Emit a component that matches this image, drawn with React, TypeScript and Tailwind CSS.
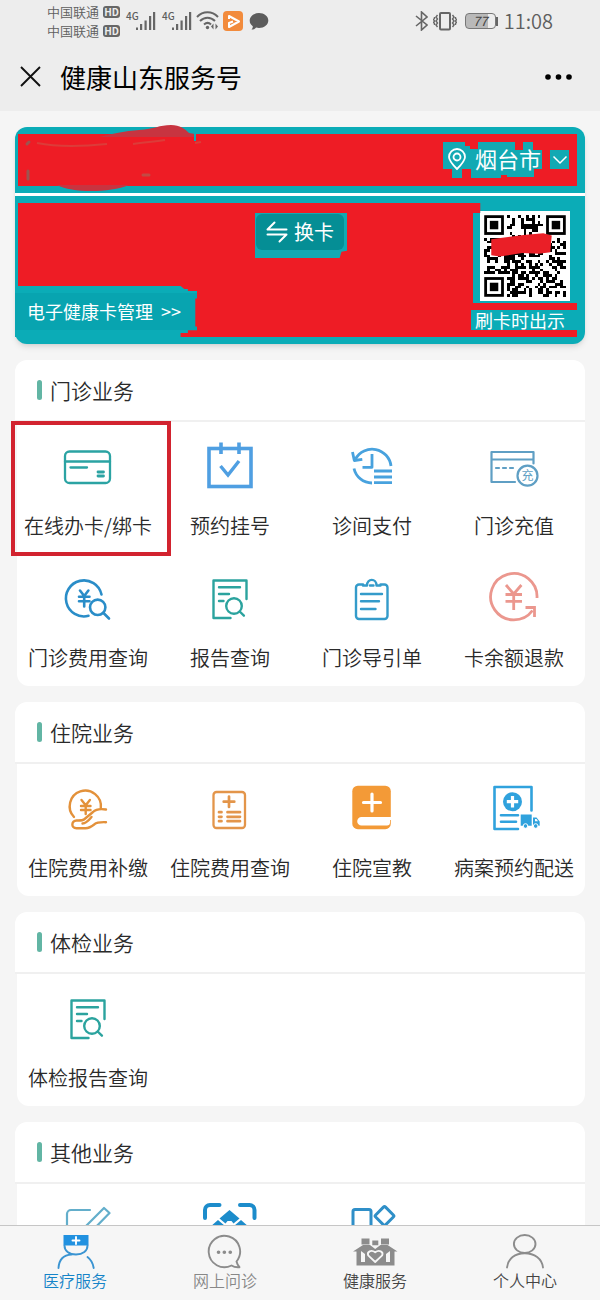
import { useState } from 'react';
import type { ReactNode } from 'react';

type Service = { label: string; icon: ReactNode; marked?: boolean };

const line = {
    fill: 'none',
    strokeLinecap: 'round' as const,
    strokeLinejoin: 'round' as const,
};

function Icon({ children }: { children: ReactNode }) {
    return (
        <svg className="w-[52px] h-[52px] overflow-visible" viewBox="0 0 52 52" aria-hidden="true">
            {children}
        </svg>
    );
}

const CardIcon = () => (
    <Icon>
        <g {...line} stroke="#2ba3a3" strokeWidth="2.3">
            <rect x="3" y="11.5" width="45" height="31.5" rx="4.5" />
            <path d="M3 21.5h45M8.5 27.5h16.5" />
            <path d="M36 32h5.5M36 36h5.5" strokeWidth="2.8" />
        </g>
    </Icon>
);

const CalendarIcon = () => (
    <Icon>
        <g fill="none" stroke="#4f9fe2" strokeWidth="3.6">
            <rect x="5" y="8.5" width="42" height="38" />
            <path d="M17 2.5V14M35 2.5V14" />
            <path d="M16.5 26l7.500 9L35 21" strokeWidth="3.4" />
        </g>
    </Icon>
);

const HistoryIcon = () => (
    <Icon>
        <g {...line} stroke="#48a2de" strokeWidth="2.8" strokeLinecap="butt">
            <path d="M45 26A19 19 0 0 0 9.5 19" />
            <path d="M6.5 12l1.8 8.500 8-1.200" />
            <path d="M8 28.5A18.5 18.5 0 0 0 26 43" />
            <path d="M26 14v13.300h-9.500" />
            <path d="M28 31h18M28 37h18M28 42.700h18" />
        </g>
    </Icon>
);

const RechargeIcon = () => (
    <Icon>
        <g {...line} stroke="#5f9fc4" strokeWidth="2.2">
            <path d="M45.5 23.500V12h-42v30H27M3.500 19.500h42" />
            <path d="M8 28h17" strokeDasharray="3 4" />
            <circle cx="39.5" cy="35.7" r="10" />
        </g>
        <text x="39.5" y="40" fontSize="12" textAnchor="middle" fill="#5f9fc4">充</text>
    </Icon>
);

const FeeSearchIcon = () => (
    <Icon>
        <g {...line} stroke="#2a8dc8" strokeWidth="2.6">
            <path d="M39.5 22.5A18 18 0 1 0 26.5 43.8" />
            <path d="M18 18.5l4.2 5.5 4.2-5.5M22.2 24v10.5M17 24.7h10.5M17 29.3h10.5" />
            <circle cx="35.7" cy="35.3" r="7.7" />
            <path d="M41.5 41l5.500 5.500" />
        </g>
    </Icon>
);

const ReportIcon = () => (
    <Icon>
        <g {...line} stroke="#2ba39e" strokeWidth="2.4">
            <path d="M42.5 27V8.500h-33V46h17" />
            <path d="M15 15.300h21M15 22h10M15 29h4.500" />
            <circle cx="30" cy="34" r="7.8" />
            <path d="M35.7 39.5l4.2 4.2" />
        </g>
    </Icon>
);

const ClipboardIcon = () => (
    <Icon>
        <g {...line} stroke="#349bca" strokeWidth="2.4">
            <path d="M17 12.500H13a3 3 0 0 0-3 3V44a3 3 0 0 0 3 3h25.500a3 3 0 0 0 3-3V15.500a3 3 0 0 0-3-3h-4" />
            <path d="M17 13.500h4c0-7.500 9.500-7.500 9.500 0h4M24 13.500h3.500" />
            <path d="M15 22h21M15 29.300h18M15 37h14.500" />
        </g>
    </Icon>
);

const RefundIcon = () => (
    <Icon>
        <g {...line} stroke="#eb978e" strokeWidth="2.8" strokeLinecap="butt">
            <path d="M49 26A23.200 23.200 0 1 0 44.500 38.500" />
            <path d="M37.500 35.500h9v9.500" strokeLinejoin="miter" />
            <path d="M18 13l7.700 9 7.700-9M25.700 22v16M17.500 22.500H34M17.500 29.300H34" />
        </g>
    </Icon>
);

const HandIcon = () => (
    <Icon>
        <g {...line} stroke="#e3913a" strokeWidth="2.4">
            <path d="M12 35A15.600 15.600 0 1 1 38.800 26" />
            <path d="M19.500 18l4.200 5.200 4.200-5.200M23.700 23.200V32M19 24h9.500M19 28h9.500" />
            <path d="M44 27.500c-6-1-10-.5-13 2.500l-9 7.500c-1.500 1.200-4 1-7.500 1-5 0-6 7.700 0 7.700h9c4 0 6.500-2 9-4 2.500-2.200 6-2.200 11.500-2" />
            <path d="M20.500 41.500c4 0 6.500-3.500 9-6.500" />
        </g>
    </Icon>
);

const BillIcon = () => (
    <Icon>
        <g {...line} stroke="#e3954a" strokeWidth="2.3">
            <rect x="9.5" y="10" width="31.5" height="36" rx="3" />
            <path d="M25 14.500V25M19.700 19.700h10.600" strokeWidth="2.7" />
            <path d="M15 30.200h2.500M15 34.800h2.500M15 39.200h2.500M23.500 30.200H36M23.500 34.800H36M23.500 39.200H36" strokeWidth="2.7" />
        </g>
    </Icon>
);

const BookIcon = () => (
    <Icon>
        <rect x="6.3" y="3.7" width="38.5" height="43.5" rx="5.5" fill="#f39a37" />
        <path d="M45 35H15.500a4.300 4.300 0 0 0 0 8.600H41a3 3 0 0 0 3-3V38h1z" fill="#fff" />
        <path d="M26 12v17M17.500 20.500h17" stroke="#fff" strokeWidth="3.2" strokeLinecap="round" />
    </Icon>
);

const DeliveryIcon = () => (
    <Icon>
        <g {...line} stroke="#30a2dd" strokeWidth="2.6">
            <path d="M43.500 28.500V5h-37v42H30" />
            <path d="M13 33.200h17M13 39.700h15" />
        </g>
        <circle cx="24.5" cy="19.7" r="9.5" fill="#30a2dd" />
        <path d="M24.500 14v11.400M18.800 19.700h11.400" stroke="#fff" strokeWidth="3.2" />
        <path d="M32.700 32.500h11v11.200h-11zM45 35.500h3.500l3.200 4v4.200H45z" fill="#30a2dd" />
        <path d="M47 37h1.500l1.500 2.300h-3z" fill="#fff" />
        <circle cx="37.5" cy="44" r="2.3" fill="#30a2dd" stroke="#fff" />
        <circle cx="47.7" cy="44" r="2.3" fill="#30a2dd" stroke="#fff" />
    </Icon>
);

const EditIcon = () => (
    <Icon>
        <g {...line} stroke="#63aecb" strokeWidth="2.2">
            <path d="M28 8H9a4 4 0 0 0-4 4v32h36V28" />
            <path d="M42 6l5.500 5L27 32l-7 1.500 1.500-7z" />
        </g>
    </Icon>
);

const ScanIcon = () => (
    <Icon>
        <g {...line} stroke="#1c8ccb" strokeWidth="4">
            <path d="M1 16V8a5 5 0 0 1 5-5h9.500M36 3h9.500a5 5 0 0 1 5 5v8M1 36v8a5 5 0 0 0 5 5h9.500M36 49h9.500a5 5 0 0 0 5-5v-8" />
        </g>
        <path d="M25.500 8l10 8.500-6 5-2-2.500h-4l-2 2.500-6-5zM14 18l7 6-7 7-8-6zM37 18l-7 6 7 7 8-6zM25.500 25l7 7-7 7-7-7z" fill="#1c8ccb" />
    </Icon>
);

const ShapesIcon = () => (
    <Icon>
        <g {...line} stroke="#2f8fc8" strokeWidth="3">
            <rect x="7" y="7.5" width="18" height="18" rx="2" />
            <rect x="31.5" y="7" width="14" height="14" rx="1.5" transform="rotate(45 38.5 14)" />
            <rect x="7" y="30" width="18" height="18" rx="2" />
            <rect x="30" y="30" width="18" height="18" rx="2" />
        </g>
    </Icon>
);

const sections: { title: string; items: Service[] }[] = [
    {
        title: '门诊业务',
        items: [
            { label: '在线办卡/绑卡', icon: <CardIcon />, marked: true },
            { label: '预约挂号', icon: <CalendarIcon /> },
            { label: '诊间支付', icon: <HistoryIcon /> },
            { label: '门诊充值', icon: <RechargeIcon /> },
            { label: '门诊费用查询', icon: <FeeSearchIcon /> },
            { label: '报告查询', icon: <ReportIcon /> },
            { label: '门诊导引单', icon: <ClipboardIcon /> },
            { label: '卡余额退款', icon: <RefundIcon /> },
        ],
    },
    {
        title: '住院业务',
        items: [
            { label: '住院费用补缴', icon: <HandIcon /> },
            { label: '住院费用查询', icon: <BillIcon /> },
            { label: '住院宣教', icon: <BookIcon /> },
            { label: '病案预约配送', icon: <DeliveryIcon /> },
        ],
    },
    {
        title: '体检业务',
        items: [{ label: '体检报告查询', icon: <ReportIcon /> }],
    },
    {
        title: '其他业务',
        items: [
            { label: '', icon: <EditIcon /> },
            { label: '', icon: <ScanIcon /> },
            { label: '', icon: <ShapesIcon /> },
        ],
    },
];

function Carrier() {
    return (
        <div className="flex items-center gap-1 h-[19px] text-[13px] leading-[19px]">
            <span>中国联通</span>
            <span className="w-[17px] h-3 rounded-[3px] bg-[#666] text-[#ededed] text-[10px] leading-3 font-bold text-center">HD</span>
        </div>
    );
}

function Signal() {
    return (
        <div className="flex items-start h-5">
            <span className="w-[10px] text-[10px] leading-[10px] font-medium">4G</span>
            <svg className="w-5 h-5" viewBox="0 0 20 20" fill="#666" aria-hidden="true">
                <path d="M0 16.500h2V19H0zM4 13h2.200v6H4zM8.500 9.500h2.200V19H8.500zM13 5h2.200v14H13zM17 1h2.200v18H17z" />
            </svg>
        </div>
    );
}

function StatusBar() {
    return (
        <div className="flex justify-between items-center h-[42px] px-[47px] text-[#5e5e5e]">
            <div className="flex items-center">
                <div className="font-[350]">
                    <Carrier />
                    <Carrier />
                </div>
                <div className="flex gap-[6px] ml-[6px]">
                    <Signal />
                    <Signal />
                </div>
                <svg className="w-6 h-5 ml-1" viewBox="0 0 24 20" fill="none" stroke="#666" strokeWidth="2" aria-hidden="true">
                    <path d="M1 6C7-.2 16-.2 22 6M4 10c4.500-4.500 10.500-4.500 15 0M8 13.500c2.200-2 5-2 7 0" />
                    <circle cx="11.5" cy="16.5" r="1.7" fill="#666" stroke="none" />
                    <path d="M17.500 12.500v6l-2.500-3zM19.500 12.500v6l2.500-3z" fill="#666" stroke="none" />
                </svg>
                <svg className="w-5 h-5 ml-[3px]" viewBox="0 0 20 20" aria-hidden="true">
                    <rect width="20" height="20" rx="4" fill="#f28b3c" />
                    <path d="M6 8V5l10 5.500L6 16v-4l4-1.500" fill="none" stroke="#fff" strokeWidth="2" strokeLinejoin="round" />
                </svg>
                <svg className="w-5 h-5 ml-[6px]" viewBox="0 0 20 20" fill="#5c5c5c" aria-hidden="true">
                    <path d="M10 2c5.200 0 9.300 3.300 9.300 7.500S15.200 17 10 17c-1 0-2-.1-2.900-.4-1.200 1.400-2.600 2-4.600 2 1-1 1.300-2 1.300-3.300C1.800 13.900.7 11.800.7 9.500.7 5.300 4.800 2 10 2z" />
                </svg>
            </div>
            <div className="flex items-center">
                <svg className="w-[13px] h-5" viewBox="0 0 13 20" fill="none" stroke="#666" strokeWidth="1.6" aria-hidden="true">
                    <path d="M1 5l11 9-5.500 5V1L12 6 1 15" />
                </svg>
                <svg className="w-6 h-5 ml-[5px]" viewBox="0 0 24 20" fill="none" stroke="#666" aria-hidden="true">
                    <rect x="7" y="2" width="10" height="16.5" rx="1" strokeWidth="2" />
                    <path d="M4.500 4L3 6l1.500 2L3 10l1.500 2L3 14l1.500 2M1.500 6v1.500l-1 1 1 1.500-1 1.500 1 1V14M19.500 4L21 6l-1.500 2 1.500 2-1.500 2 1.500 2-1.500 2M22.500 6v1.500l1 1-1 1.500 1 1.500-1 1V14" strokeWidth="1.4" />
                </svg>
                <div className="flex items-center ml-2">
                    <div className="w-[31px] h-4 rounded-sm border border-[#777] bg-gradient-to-r from-[#b9b9b9] from-75% to-[#ededed] to-75% text-[13px] leading-[14px] italic text-center text-[#444]">77</div>
                    <div className="w-[2px] h-[9px] bg-[#666]" />
                </div>
                <span className="ml-[6px] text-[20px] leading-6 font-[350]">11:08</span>
            </div>
        </div>
    );
}

const QR_SIZE = 29;

function isDark(x: number, y: number) {
    const nearFinder = (fx: number, fy: number) => x >= fx - 1 && x <= fx + 7 && y >= fy - 1 && y <= fy + 7;
    if (nearFinder(0, 0) || nearFinder(22, 0) || nearFinder(0, 22)) return false;
    const n = Math.sin(x * 12.9898 + y * 78.233) * 43758.5453;
    return n - Math.floor(n) < 0.52;
}

function QrCode() {
    const cells: string[] = [];
    for (let y = 0; y < QR_SIZE; y++) {
        for (let x = 0; x < QR_SIZE; x++) {
            if (isDark(x, y)) cells.push(`M${x} ${y}h1v1h-1z`);
        }
    }
    return (
        <svg className="w-[90px] h-[90px] bg-white" viewBox="-1.5 -1.5 32 32" role="img" aria-label="二维码">
            <path d={cells.join('')} fill="#000" shapeRendering="crispEdges" />
            {[[0, 0], [22, 0], [0, 22]].map(([x, y]) => (
                <g key={`${x}-${y}`}>
                    <rect x={x + 0.5} y={y + 0.5} width="6" height="6" fill="none" stroke="#000" />
                    <rect x={x + 2} y={y + 2} width="3" height="3" />
                </g>
            ))}
            <path d="M2.500 8.500L14 7l7-.6 3 .8-.5 6-4 .5-6-.3-8 1.300-3-.5z" fill="#ea1f27" />
        </svg>
    );
}

function HealthCard() {
    return (
        <div className="relative shrink-0 rounded-xl bg-[#0bacb7] text-white shadow-md">
            {/* brush strokes over the holder's name */}
            <svg className="absolute left-0 -top-1 z-10 w-[240px] h-20 pointer-events-none" viewBox="0 0 240 80" fill="none" aria-hidden="true">
                <path d="M84 14c12-3 26-6 40-7 16-1 20-5 32-5 9 0 14 4 18 8l6 1v3z" fill="#c83440" />
                <path d="M42 62c8 4 20 6 34 6s28-2 38-6z" fill="#c83440" />
                <path d="M12 21l2-2M13 48v8" stroke="#9c5550" strokeWidth="3" strokeLinecap="round" />
                <path d="M22 20c20 4 40 4 70 1M118 21c12-2 20-2 32-4M180 20l6-1" stroke="#dc3c39" strokeWidth="2" />
                <path d="M128 52h6" stroke="#c24a44" strokeWidth="3" strokeLinecap="round" />
                <path d="M180 9v9" stroke="#0bacb7" strokeWidth="2" />
            </svg>

            <div className="pt-[7px] pb-[7px] pl-[3px] pr-2 border-b-[3px] border-white">
                <div className="flex justify-end h-[52px] pt-2 pr-2 bg-[#ee1c25]">
                    <button className="relative flex items-start h-9 pl-1">
                        <svg className="absolute left-0 top-0 w-[126px] h-9" viewBox="0 0 126 36" fill="#12a9b3" aria-hidden="true">
                            <path d="M0 0h22v4h5v3h8V0h37v8h8V0h10v8h9v19h-8v8H64v-2h-6v3H28v-9h-9v9H9v-9H0zM107 8h19v19h-19z" />
                        </svg>
                        <svg className="relative w-5 h-6 mt-[6px]" viewBox="0 0 20 24" fill="none" stroke="#fff" strokeWidth="1.8" aria-hidden="true">
                            <path d="M10 21C5 16 2 12.500 2 9a8 8 0 0 1 16 0c0 3.500-3 7-8 12z" />
                            <circle cx="10" cy="9" r="3.5" />
                        </svg>
                        <span className="relative ml-2 text-[22px] leading-8">烟台市</span>
                        <svg className="relative w-4 h-4 ml-[11px] mr-px mt-[10px]" viewBox="0 0 16 16" fill="none" stroke="#fff" strokeWidth="1.5" aria-hidden="true">
                            <path d="M1.500 4.500L8 11l6.500-6.500" />
                        </svg>
                    </button>
                </div>
            </div>

            <div className="py-[7px] pl-[3px] pr-2">
                <div className="flex h-[134px] bg-[#ee1c25]">
                    <div className="flex flex-col justify-between flex-1 pt-[10px]">
                        <div className="self-end mr-[124px] pr-[3px] pb-2 pt-px pl-px bg-[#12a9b3] [clip-path:polygon(0_0,100%_0,100%_84%,94%_86%,92%_100%,0_100%)]">
                            <button className="flex items-center gap-[6px] h-9 pl-[10px] pr-[10px] rounded-md bg-[#058e95] text-[20px] leading-9">
                                <svg className="w-[22px] h-[22px]" viewBox="0 0 22 22" fill="none" stroke="#fff" strokeWidth="2" strokeLinecap="round" strokeLinejoin="round" aria-hidden="true">
                                    <path d="M8.500 1.500l-7 7h19M1.500 13.500h19l-7 7" />
                                </svg>
                                换卡
                            </button>
                        </div>
                        <a
                            href="#manage"
                            className="self-start -ml-[3px] py-[7px] bg-[#0bacb7] [clip-path:polygon(0_0,91%_0,93%_6%,95%_6%,95%_10%,100%_10%,100%_24%,99%_24%,99%_80%,100%_80%,100%_87%,95%_87%,95%_92%,91%_92%,91%_100%,0_100%)]"
                        >
                            <span className="flex gap-2 h-[37px] pl-3 pr-4 bg-[#08a4b0] text-[18px] leading-9">
                                <span>电子健康卡管理</span>
                                <span>&gt;&gt;</span>
                            </span>
                        </a>
                    </div>
                    <div className="flex flex-col w-[106px]">
                        <div className="ml-[2px] pl-[7px] pt-2 pb-[2px] bg-[#0bacb7] [clip-path:polygon(7%_0,100%_0,100%_100%,0_100%,0_10%,7%_10%)]">
                            <QrCode />
                        </div>
                        <div className="mt-[7px] pl-1 bg-[#0bacb7] text-[18px] leading-5 whitespace-nowrap">刷卡时出示</div>
                    </div>
                </div>
            </div>
        </div>
    );
}

function Section({ title, items }: { title: string; items: Service[] }) {
    return (
        <section className="shrink-0">
            <div className="flex items-center gap-2 h-[62px] pl-[22px] rounded-t-xl bg-white border-b-2 border-[#f0f0f0]">
                <span className="w-[5px] h-5 rounded-sm bg-[#62b5a4]" />
                <h2 className="text-[21px] leading-7 font-[350] text-[#2a2a2a]">{title}</h2>
            </div>
            <div className="grid grid-cols-4 ml-[2px] rounded-b-xl bg-white">
                {items.map((item, i) => (
                    <button key={i} className="relative flex flex-col items-center pt-[18px] pb-[14px]">
                        {item.icon}
                        <span className="h-7 mt-5 text-[20px] leading-7 font-[350] text-[#2a2a2a] whitespace-nowrap">{item.label}</span>
                        {item.marked && (
                            <span className="absolute -left-[6px] -right-3 -top-px bottom-[-2px] border-4 border-[#d2232f] pointer-events-none" />
                        )}
                    </button>
                ))}
            </div>
        </section>
    );
}

const tabs = [
    {
        label: '医疗服务',
        icon: (
            <>
                <path d="M12.500 1h25v10.500h-25z" fill="#2191e0" stroke="none" />
                <path d="M25 3v7M21.500 6.500h7" stroke="#fff" />
                <path d="M13.500 11.500c0 5.500 4.500 9 11.500 9s11.500-3.500 11.500-9M7.500 34c.5-8 5-13 13-13.500M36.500 23c4 3 5.500 6.500 6.200 11" stroke="#3a94d2" />
            </>
        ),
    },
    {
        label: '网上问诊',
        icon: (
            <>
                <path d="M35.500 27.500a15.700 15.700 0 1 0-5 4c2 1.300 5 2 8 1.700-1.700-1.700-2.500-3.700-3-5.700z" />
                <path d="M17.500 18.300h.1M23.300 18.300h.1M29.200 18.300h.1" strokeWidth="3.6" />
            </>
        ),
    },
    {
        label: '健康服务',
        icon: (
            <g fill="#8c8c8c" stroke="none">
                <path d="M10.500 4.500h8v6h-8zM30 4.500h8v6h-8zM21.300 6.500h6v4.800h-6zM2 17.500l10-6.500h7l5.200 4 5.300-4h7l10 6.500h-3v14h-38v-14z" />
                <path d="M10 17v11h4v-8zM39 17v11h-4v-8z" fill="#f6f6f6" />
                <path d="M24.200 28l-7-6.700c-1.500-3.500 3-6 7-3 4-3 8.500-.5 7 3z" stroke="#f6f6f6" strokeWidth="1.8" />
            </g>
        ),
    },
    {
        label: '个人中心',
        icon: (
            <>
                <ellipse cx="23.7" cy="10" rx="10.8" ry="9" />
                <path d="M6 33.500c1-9 8-14.300 17.700-14.300S41 24.500 42 33.500" />
            </>
        ),
    },
];

export default function App() {
    const [active, setActive] = useState(0);

    return (
        <div className="flex flex-col h-screen bg-[#f5f5f5] font-['Noto_Sans_CJK_SC',sans-serif]">
            <header className="shrink-0 bg-[#ededed]">
                <StatusBar />
                <div className="flex items-center h-[69px] px-5 text-black">
                    <button aria-label="关闭" className="mr-[19px]">
                        <svg className="w-[21px] h-[21px]" viewBox="0 0 21 21" stroke="#111" strokeWidth="1.9" aria-hidden="true">
                            <path d="M1 1l19 19M20 1L1 20" />
                        </svg>
                    </button>
                    <h1 className="flex-1 text-[26px] leading-9">健康山东服务号</h1>
                    <button aria-label="更多" className="mr-2">
                        <svg className="w-7 h-2" viewBox="0 0 28 8" aria-hidden="true">
                            <circle cx="4" cy="4" r="2.8" />
                            <circle cx="14.5" cy="4" r="2.8" />
                            <circle cx="25" cy="4" r="2.8" />
                        </svg>
                    </button>
                </div>
            </header>

            <main className="flex flex-col flex-1 gap-4 min-h-0 px-[15px] pt-4 overflow-y-auto [scrollbar-width:none]">
                <HealthCard />
                {sections.map((section) => (
                    <Section key={section.title} {...section} />
                ))}
            </main>

            <nav className="grid grid-cols-4 shrink-0 border-t border-[#c6c6c6] bg-[#f6f6f6]">
                {tabs.map((tab, i) => (
                    <button
                        key={tab.label}
                        onClick={() => setActive(i)}
                        className={`flex flex-col items-center pt-2 pb-[10px] text-[16px] leading-5 font-[350] ${i === active ? 'text-[#1584c8]' : i === 1 ? 'text-[#888]' : 'text-[#444]'}`}
                    >
                        <svg className="w-12 h-9" viewBox="0 0 48 36" fill="none" stroke="#8c8c8c" strokeWidth="1.9" strokeLinecap="round" strokeLinejoin="round" aria-hidden="true">
                            {tab.icon}
                        </svg>
                        {tab.label}
                    </button>
                ))}
            </nav>
        </div>
    );
}
